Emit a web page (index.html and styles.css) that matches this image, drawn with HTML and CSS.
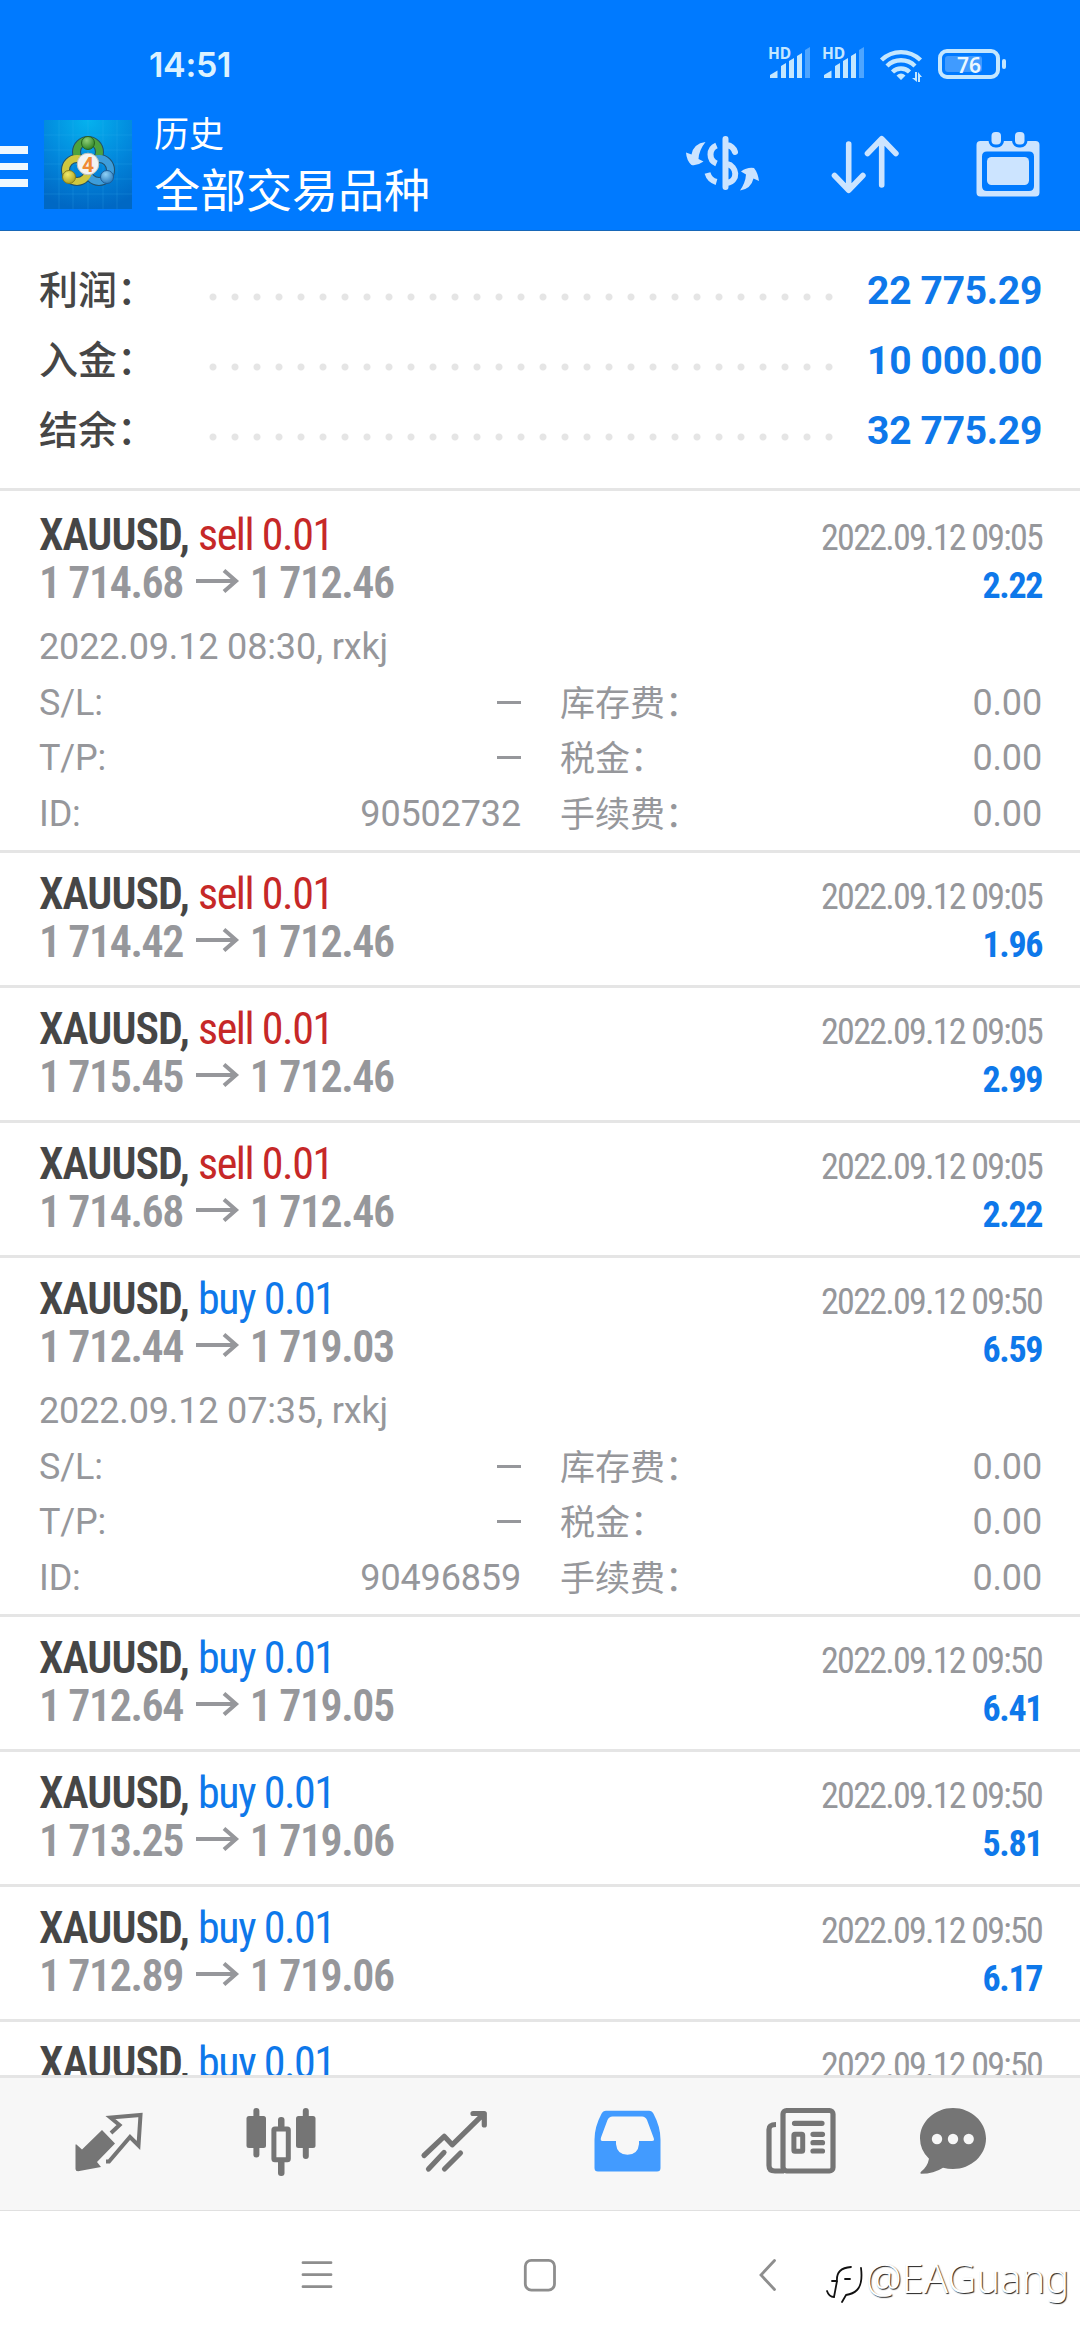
FILE: index.html
```html
<!DOCTYPE html>
<html lang="zh-CN">
<head>
<meta charset="utf-8">
<title>历史</title>
<link rel="stylesheet" href="styles.css">
</head>
<body>
<div class="screen">
  <header class="header">
    <div class="status">
      <span class="clock">14:51</span>
      <svg class="status-icons" width="250" height="50" viewBox="764 40 250 50">
        <g id="signal" fill="#c4e7ff">
          <text x="768" y="58.500" class="hd">HD</text>
          <path d="M770 78v-3l7.500-4.500v7.500zM781 78v-12l5-3v15zM789 78v-17l5-3v20zM797 78v-22l5-3v25z"/>
          <path d="M805 78v-28l5-3v31z" opacity=".4"/>
        </g>
        <use href="#signal" x="54"/>
        <g fill="none" stroke="#c4e7ff" stroke-width="4.400">
          <path d="M881.500 60a28 28 0 0 1 39 0M887 66a20 20 0 0 1 28 0M892.500 72a12 12 0 0 1 17 0"/>
        </g>
        <path d="M896.500 75.500q4.500-4 9 0l-4.500 4.500zM912 78h3v-6h2v10zM918 72l4 5h-2v5h-2z" fill="#c4e7ff"/>
        <rect x="940" y="51" width="58" height="26" rx="7" fill="none" stroke="#c4e7ff" stroke-width="4"/>
        <rect x="945" y="56" width="37" height="16" rx="3" fill="#409bff"/>
        <rect x="1002" y="59" width="4" height="10" rx="2" fill="#c4e7ff"/>
        <text x="969" y="72.500" class="battery">76</text>
      </svg>
    </div>
    <div class="toolbar">
      <div class="menu"><i></i><i></i><i></i></div>
      <svg class="logo" width="88" height="89" viewBox="44 120 88 89">
        <defs>
          <radialGradient id="sky" cx=".5" cy="0" r="1"><stop offset="0" stop-color="#05b2ee"/><stop offset=".55" stop-color="#0287dc"/><stop offset="1" stop-color="#0068c4"/></radialGradient>
          <radialGradient id="gr" cx=".4" cy=".3" r=".8"><stop offset="0" stop-color="#8fcf78"/><stop offset="1" stop-color="#237a1c"/></radialGradient>
          <radialGradient id="ye" cx=".4" cy=".3" r=".8"><stop offset="0" stop-color="#f2ea6a"/><stop offset="1" stop-color="#a59a19"/></radialGradient>
          <radialGradient id="bl" cx=".4" cy=".3" r=".8"><stop offset="0" stop-color="#8fd0f6"/><stop offset="1" stop-color="#1c6fb5"/></radialGradient>
        </defs>
        <rect x="44" y="120" width="88" height="89" fill="url(#sky)"/>
        <path d="M44 135h88M44 150h88M44 164h88M44 179h88M44 194h88M59 120v89M73 120v89M88 120v89M103 120v89M117 120v89" stroke="#3db4f0" stroke-opacity=".2" fill="none"/>
        <g fill="none">
          <g stroke="#22506a" stroke-width="9"><circle cx="88" cy="152" r="11.500"/><circle cx="77" cy="170" r="11.500"/><circle cx="99" cy="170" r="11.500"/></g>
          <circle cx="88" cy="152" r="11.500" stroke="#4da23e" stroke-width="7"/>
          <circle cx="99" cy="170" r="11.500" stroke="#3d9ddb" stroke-width="7"/>
          <circle cx="77" cy="170" r="11.500" stroke="#cfc73f" stroke-width="7"/>
        </g>
        <circle cx="88" cy="143" r="6.500" fill="url(#gr)" stroke="#24641e"/>
        <circle cx="69" cy="177" r="6.500" fill="url(#ye)" stroke="#857c18"/>
        <circle cx="107" cy="177" r="6.500" fill="url(#bl)" stroke="#1d5b96"/>
        <circle cx="88" cy="164" r="10.800" fill="#f3f3f3" stroke="#c2c2b8"/>
        <text x="88" y="171.500" class="four">4</text>
      </svg>
      <div class="titles"><div class="title-small">历史</div><div class="title-big">全部交易品种</div></div>
      <svg class="tools" width="380" height="80" viewBox="680 124 380 80" fill="#cce4ff">
        <path d="M705.500 142q-12 1.500-14 12.500l-5.500-2q.5 8 5.500 12.500q6 1 12-3.500l-5-2.500q.5-9 7-17zM740 190.500q11-1.500 13.500-12l5.500 2.500q-1-8-5-13q-7-1-13 3.500l5 3q-.5 8-6 16z"/>
        <g fill="none" stroke="#cce4ff" stroke-width="6">
          <path d="M716.500 145.500q-6 2.500-6 9t6 9M707.500 173q2 7 9 9"/>
          <path d="M725.500 139v48M727 145q6 1 8 7M727 164c10 2 12 17 0 19" stroke-linecap="round"/>
        </g>
        <path d="M848.700 144v46M834.500 175.500l14.200 14.700l14.200-14.700M881.700 185v-46M867.500 153.500l14.200-14.700l14.200 14.700" fill="none" stroke="#cce4ff" stroke-width="5.600" stroke-linecap="round" stroke-linejoin="round"/>
        <path fill-rule="evenodd" d="M980.500 141h55q4 0 4 4v47.500q0 4-4 4h-55q-4 0-4-4v-47.500q0-4 4-4zM987 151.500q-5 0-5 5v29.500q0 5 5 5h42q5 0 5-5v-29.500q0-5-5-5z"/>
        <rect x="987" y="157" width="42" height="28" rx="4.500"/>
        <g stroke="#007aff" stroke-width="6" paint-order="stroke"><rect x="991.500" y="132" width="9.500" height="12.500" rx="4"/><rect x="1015" y="132" width="9.500" height="12.500" rx="4"/></g>
      </svg>
    </div>
  </header>

  <main class="content">
    <section class="summary">
      <div class="sum-row"><span class="sum-label">利润：</span><span class="dots"></span><span class="sum-value">22 775.29</span></div>
      <div class="sum-row"><span class="sum-label">入金：</span><span class="dots"></span><span class="sum-value">10 000.00</span></div>
      <div class="sum-row"><span class="sum-label">结余：</span><span class="dots"></span><span class="sum-value">32 775.29</span></div>
    </section>

    <article class="deal open">
      <div class="line"><span class="sym">XAUUSD, <b class="sell">sell 0.01</b></span><span class="time">2022.09.12 09:05</span></div>
      <div class="line"><span class="price">1 714.68<svg class="arrow" viewBox="0 0 44 24"><path d="M0 12h40M28 1.500l12 10.500l-12 10.500"/></svg>1 712.46</span><span class="profit">2.22</span></div>
      <div class="details">
        <div class="comment">2022.09.12 08:30, rxkj</div>
        <div class="cell"><span>S/L:</span><i class="dash"></i></div><div class="cell"><span class="cjk">库存费：</span><span>0.00</span></div>
        <div class="cell"><span>T/P:</span><i class="dash"></i></div><div class="cell"><span class="cjk">税金：</span><span>0.00</span></div>
        <div class="cell"><span>ID:</span><span>90502732</span></div><div class="cell"><span class="cjk">手续费：</span><span>0.00</span></div>
      </div>
    </article>
    <article class="deal">
      <div class="line"><span class="sym">XAUUSD, <b class="sell">sell 0.01</b></span><span class="time">2022.09.12 09:05</span></div>
      <div class="line"><span class="price">1 714.42<svg class="arrow" viewBox="0 0 44 24"><path d="M0 12h40M28 1.500l12 10.500l-12 10.500"/></svg>1 712.46</span><span class="profit">1.96</span></div>
    </article>
    <article class="deal">
      <div class="line"><span class="sym">XAUUSD, <b class="sell">sell 0.01</b></span><span class="time">2022.09.12 09:05</span></div>
      <div class="line"><span class="price">1 715.45<svg class="arrow" viewBox="0 0 44 24"><path d="M0 12h40M28 1.500l12 10.500l-12 10.500"/></svg>1 712.46</span><span class="profit">2.99</span></div>
    </article>
    <article class="deal">
      <div class="line"><span class="sym">XAUUSD, <b class="sell">sell 0.01</b></span><span class="time">2022.09.12 09:05</span></div>
      <div class="line"><span class="price">1 714.68<svg class="arrow" viewBox="0 0 44 24"><path d="M0 12h40M28 1.500l12 10.500l-12 10.500"/></svg>1 712.46</span><span class="profit">2.22</span></div>
    </article>
    <article class="deal open">
      <div class="line"><span class="sym">XAUUSD, <b class="buy">buy 0.01</b></span><span class="time">2022.09.12 09:50</span></div>
      <div class="line"><span class="price">1 712.44<svg class="arrow" viewBox="0 0 44 24"><path d="M0 12h40M28 1.500l12 10.500l-12 10.500"/></svg>1 719.03</span><span class="profit">6.59</span></div>
      <div class="details">
        <div class="comment">2022.09.12 07:35, rxkj</div>
        <div class="cell"><span>S/L:</span><i class="dash"></i></div><div class="cell"><span class="cjk">库存费：</span><span>0.00</span></div>
        <div class="cell"><span>T/P:</span><i class="dash"></i></div><div class="cell"><span class="cjk">税金：</span><span>0.00</span></div>
        <div class="cell"><span>ID:</span><span>90496859</span></div><div class="cell"><span class="cjk">手续费：</span><span>0.00</span></div>
      </div>
    </article>
    <article class="deal">
      <div class="line"><span class="sym">XAUUSD, <b class="buy">buy 0.01</b></span><span class="time">2022.09.12 09:50</span></div>
      <div class="line"><span class="price">1 712.64<svg class="arrow" viewBox="0 0 44 24"><path d="M0 12h40M28 1.500l12 10.500l-12 10.500"/></svg>1 719.05</span><span class="profit">6.41</span></div>
    </article>
    <article class="deal">
      <div class="line"><span class="sym">XAUUSD, <b class="buy">buy 0.01</b></span><span class="time">2022.09.12 09:50</span></div>
      <div class="line"><span class="price">1 713.25<svg class="arrow" viewBox="0 0 44 24"><path d="M0 12h40M28 1.500l12 10.500l-12 10.500"/></svg>1 719.06</span><span class="profit">5.81</span></div>
    </article>
    <article class="deal">
      <div class="line"><span class="sym">XAUUSD, <b class="buy">buy 0.01</b></span><span class="time">2022.09.12 09:50</span></div>
      <div class="line"><span class="price">1 712.89<svg class="arrow" viewBox="0 0 44 24"><path d="M0 12h40M28 1.500l12 10.500l-12 10.500"/></svg>1 719.06</span><span class="profit">6.17</span></div>
    </article>
    <article class="deal">
      <div class="line"><span class="sym">XAUUSD, <b class="buy">buy 0.01</b></span><span class="time">2022.09.12 09:50</span></div>
    </article>
  </main>

  <nav class="tabs">
    <svg viewBox="21 2078 173 132"><path d="M75.500 2145.500q0-2 1.500-.5l5 4.500l20-19.500l13 13.500l-18 18.500l4 5l-23 4.300q-2.500 0-2.500-2.300z"/><path class="thin" d="M111 2133l8.500-8l-9-7.500l30-2.500l-2 30.500l-8.500-8.500l-21 24.500h-3"/></svg>
    <svg viewBox="194 2078 173 132"><rect x="246.500" y="2116" width="19.500" height="32" rx="2.500"/><rect x="253.400" y="2108" width="6" height="49.500" rx="3"/><rect x="296" y="2116" width="19.500" height="32" rx="2.500"/><rect x="302.800" y="2108" width="6" height="51" rx="3"/><rect x="278" y="2117" width="6.500" height="12" rx="3"/><rect x="278" y="2158" width="6.500" height="18" rx="3"/><rect x="273.900" y="2129" width="14.400" height="30.700" rx="1" fill="none" stroke="#757575" stroke-width="5"/></svg>
    <svg viewBox="367 2078 173 132"><path class="line5" d="M424 2155.500l20.200-19.200l8 8.500l31-30.500M473 2113.500h11.300v11.500M428.500 2169l15.500-16.500M444.500 2169l16-16"/></svg>
    <svg viewBox="540 2078 173 132"><path fill="#429bff" fill-rule="evenodd" d="M606 2110.700h43q3 0 4.500 3q7 13 7 26v28.300q0 3.500-3.500 3.500h-59q-3.500 0-3.500-3.500v-28.300q0-13 7-26q1.500-3 4.500-3zM612.500 2116.500q-3.500 0-5 3.500l-6.500 17.500q-1 3.500 1.500 3.500h13.500v3q1 10.700 11.500 10.700t11.500-10.700v-3h13q3 0 1.500-3.500l-6.500-17.500q-1.500-3.500-5-3.500z"/></svg>
    <svg viewBox="713 2078 173 132"><rect x="783" y="2110.500" width="50" height="60.500" rx="3.500" fill="none" stroke="#757575" stroke-width="5.200"/><path class="plain" stroke-width="5.200" d="M776 2124.500q-7 0-7 5v36q0 5.500 6 5.500h9"/><path d="M784 2166l5 5h-8z"/><path class="line5" d="M794.500 2123.300h27.500M813 2134.300h9.500M813 2142.700h9.500M813 2151h9.500"/><rect x="793.900" y="2134.300" width="8.800" height="17" rx="1" fill="none" stroke="#757575" stroke-width="5"/></svg>
    <svg viewBox="886 2078 173 132"><path d="M953 2108c18 0 33 13.500 33 30.500s-15 30.500-33 30.500q-5 0-10-1.300q-9 6-22 6q-1.500-.7 0-2q6.500-5 8-13q-9-8.500-9-20.200c0-17 15-30.500 33-30.500z"/><g fill="#f7f7f7"><circle cx="937" cy="2139" r="5.200"/><circle cx="953" cy="2139" r="5.200"/><circle cx="968.700" cy="2139" r="5.200"/></g></svg>
  </nav>

  <footer class="sysnav">
    <svg width="260" height="48" viewBox="300 2251 260 48"><path d="M303 2262.700h28M303 2274.700h28M303 2286.700h28"/><rect x="525.300" y="2260.300" width="29.200" height="29.800" rx="6"/></svg>
    <svg width="20" height="48" viewBox="757 2251 20 48"><path d="M774.500 2260.500l-13.500 14.500l13.500 14.500"/></svg>
    <div class="watermark">
      <svg width="40" height="44" viewBox="825 2264 40 44"><g fill="none"><path stroke="#111" stroke-width="1.800" d="M832 2281h5q-1-13 14-14M827 2291q2 6 7 6l3-16M845 2279h5M861 2268q2 16-4 22q-4 4-11 5l-4 7"/></g></svg>
      <span>@EAGuang</span>
    </div>
  </footer>
</div>
</body>
</html>
```
FILE: styles.css
```css
* { box-sizing: border-box; }
body { margin: 0; background: #fff; font-family: Roboto, "Noto Sans CJK SC", sans-serif; }
svg { display: block; flex: none; }
.screen { width: 1080px; height: 2340px; display: flex; flex-direction: column; overflow: hidden; background: #fff; }

.header { height: 231px; flex: none; background: #007aff; border-bottom: 1px solid #1767b8; color: #fff; }
.status { height: 102px; padding: 40px 66px 0 149px; display: flex; justify-content: space-between; align-items: flex-start; }
.clock { font: 600 34px/50px Inter, sans-serif; color: #dcf2ff; letter-spacing: -.3px; }
.hd { font: 700 15.500px "Noto Sans", sans-serif; }
.battery { font: 600 21px "Noto Sans", sans-serif; fill: #eaf7ff; text-anchor: middle; }
.toolbar { display: flex; height: 128px; padding-top: 10px; }
.menu { width: 28px; margin: 34px 16px 0 0; display: flex; flex-direction: column; gap: 9px; }
.menu i { height: 7.700px; background: #eef8ff; }
.logo { margin-top: 8px; }
.four { font: 700 21px Roboto, sans-serif; fill: #f08a34; text-anchor: middle; }
.titles { margin: -2px 0 0 22px; flex: 1; white-space: nowrap; }
.title-small { font: 400 35px/44px "Noto Sans CJK SC", sans-serif; }
.title-big { font: 400 46px/62px "Noto Sans CJK SC", sans-serif; margin-top: 2px; }
.tools { margin: 12px 20px 0 0; }

.content { height: 1844px; flex: none; overflow: hidden; }
.summary { height: 260px; padding: 23px 38px 0 39px; border-bottom: 3px solid #e5e5e5; margin-bottom: 3px; }
.sum-row { height: 70px; display: flex; align-items: center; }
.sum-label { width: 163px; font: 500 39px/70px "Noto Sans CJK SC", sans-serif; color: #464646; margin-top: -4px; }
.dots { width: 638px; height: 8px; margin-top: 16px; background: radial-gradient(circle, #e5e5e5 3px, transparent 4px) 0 0 / 22px 8px repeat-x; }
.sum-value { flex: 1; text-align: right; white-space: nowrap; font: 700 39px/70px Roboto, sans-serif; letter-spacing: -.3px; color: #0e78ea; margin-top: 3px; }

.deal { height: 135px; padding: 16.500px 38px 0 39px; border-bottom: 3px solid #e5e5e5; font-family: "Roboto Condensed", Roboto, sans-serif; }
.deal.open { height: 359px; }
.line { height: 48px; display: flex; justify-content: space-between; align-items: baseline; line-height: 48px; white-space: nowrap; }
.sym { font-size: 44px; font-weight: 600; letter-spacing: -.95px; color: #464646; }
.sym b { font-weight: 400; letter-spacing: -1.450px; }
.sell { color: #c62828; }
.buy { color: #0e78ea; }
.time { font-size: 36px; letter-spacing: -1.750px; color: #96979b; }
.price { font-size: 44px; font-weight: 600; letter-spacing: -1.450px; color: #96979b; }
.arrow { display: inline-block; width: 44px; height: 24px; margin: 0 10px 0 13px; vertical-align: 5px; fill: none; stroke: #96979b; stroke-width: 4; }
.profit { font-size: 36px; font-weight: 700; letter-spacing: -1.400px; color: #0e78ea; }
.details { display: grid; grid-template-columns: 482px 482px; column-gap: 39px; grid-auto-rows: 55.600px; margin-top: 13.500px; font: 400 36px/55.600px Roboto, sans-serif; letter-spacing: -.150px; color: #96979b; }
.comment { grid-column: 1 / 3; }
.cell { display: flex; justify-content: space-between; }
.cjk { font: 400 35px/55px "Noto Sans CJK SC", sans-serif; letter-spacing: 0; margin-top: -3px; }
.dash { width: 24px; height: 3px; margin-top: 25px; background: #96979b; }

.tabs { height: 136px; flex: none; padding-left: 21px; display: flex; background: #f7f7f7; border-top: 3px solid #e5e5e5; border-bottom: 1px solid #e0e0e0; fill: #757575; }
.tabs svg { width: 173px; height: 132px; }
.thin { fill: none; stroke: #757575; stroke-width: 4; }
.plain { fill: none; stroke: #757575; }
.line5 { fill: none; stroke: #757575; stroke-width: 5.200; stroke-linecap: round; stroke-linejoin: round; }

.sysnav { flex: 1; display: flex; padding: 40px 0 0 300px; fill: none; stroke: #8e8e8e; stroke-width: 2.800; stroke-linecap: round; }
.sysnav > svg + svg { margin-left: 197px; }
.watermark { display: flex; margin: 13px 0 0 48px; height: 44px; }
.watermark span { margin-left: 1px; font: 300 40px/28px "Noto Sans", sans-serif; color: #fff; text-shadow: 1px 1px 1px #222; white-space: nowrap; stroke: none; }
```
